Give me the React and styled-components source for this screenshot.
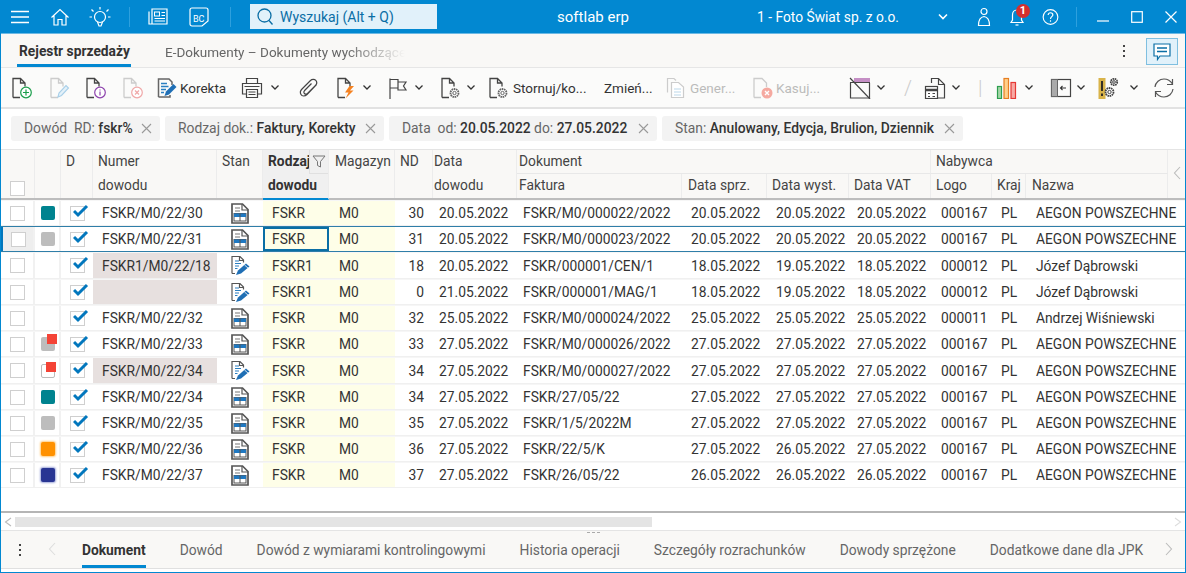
import React from 'react';
import styled, { createGlobalStyle, css } from 'styled-components';

const COLUMNS = [34, 26, 32, 124, 46, 66, 66, 38, 84, 165, 85, 82, 82, 61, 34, 142, 17];
const GRID = COLUMNS.map((w) => `${w}px`).join(' ');

const ROW_HEIGHTS = [26, 26, 27, 26, 26, 26, 27, 26, 26, 26, 26];

const ROWS = [
	{ mark: 'teal', num: 'FSKR/M0/22/30', stan: 'doc', rodzaj: 'FSKR', nd: 30, data: '20.05.2022', fakt: 'FSKR/M0/000022/2022', sprz: '20.05.2022', wyst: '20.05.2022', vat: '20.05.2022', logo: '000167', nazwa: 'AEGON POWSZECHNE' },
	{ mark: 'gray', num: 'FSKR/M0/22/31', stan: 'doc', rodzaj: 'FSKR', nd: 31, data: '20.05.2022', fakt: 'FSKR/M0/000023/2022', sprz: '20.05.2022', wyst: '20.05.2022', vat: '20.05.2022', logo: '000167', nazwa: 'AEGON POWSZECHNE', selected: true },
	{ num: 'FSKR1/M0/22/18', pink: true, stan: 'edit', rodzaj: 'FSKR1', nd: 18, data: '20.05.2022', fakt: 'FSKR/000001/CEN/1', sprz: '18.05.2022', wyst: '19.05.2022', vat: '18.05.2022', logo: '000012', nazwa: 'Józef Dąbrowski' },
	{ num: '', pink: true, stan: 'edit', rodzaj: 'FSKR1', nd: 0, data: '21.05.2022', fakt: 'FSKR/000001/MAG/1', sprz: '18.05.2022', wyst: '19.05.2022', vat: '18.05.2022', logo: '000012', nazwa: 'Józef Dąbrowski' },
	{ num: 'FSKR/M0/22/32', stan: 'doc', rodzaj: 'FSKR', nd: 32, data: '25.05.2022', fakt: 'FSKR/M0/000024/2022', sprz: '25.05.2022', wyst: '25.05.2022', vat: '25.05.2022', logo: '000011', nazwa: 'Andrzej Wiśniewski' },
	{ mark: 'redGray', num: 'FSKR/M0/22/33', stan: 'doc', rodzaj: 'FSKR', nd: 33, data: '27.05.2022', fakt: 'FSKR/M0/000026/2022', sprz: '27.05.2022', wyst: '27.05.2022', vat: '27.05.2022', logo: '000167', nazwa: 'AEGON POWSZECHNE' },
	{ mark: 'redWhite', num: 'FSKR/M0/22/34', pink: true, stan: 'edit', rodzaj: 'FSKR', nd: 34, data: '27.05.2022', fakt: 'FSKR/M0/000027/2022', sprz: '27.05.2022', wyst: '27.05.2022', vat: '27.05.2022', logo: '000167', nazwa: 'AEGON POWSZECHNE' },
	{ mark: 'teal', num: 'FSKR/M0/22/34', stan: 'doc', rodzaj: 'FSKR', nd: 34, data: '27.05.2022', fakt: 'FSKR/27/05/22', sprz: '27.05.2022', wyst: '27.05.2022', vat: '27.05.2022', logo: '000167', nazwa: 'AEGON POWSZECHNE' },
	{ mark: 'gray', num: 'FSKR/M0/22/35', stan: 'doc', rodzaj: 'FSKR', nd: 35, data: '27.05.2022', fakt: 'FSKR/1/5/2022M', sprz: '27.05.2022', wyst: '27.05.2022', vat: '27.05.2022', logo: '000167', nazwa: 'AEGON POWSZECHNE' },
	{ mark: 'orange', num: 'FSKR/M0/22/36', stan: 'doc', rodzaj: 'FSKR', nd: 36, data: '27.05.2022', fakt: 'FSKR/22/5/K', sprz: '27.05.2022', wyst: '26.05.2022', vat: '27.05.2022', logo: '000167', nazwa: 'AEGON POWSZECHNE' },
	{ mark: 'navy', num: 'FSKR/M0/22/37', stan: 'doc', rodzaj: 'FSKR', nd: 37, data: '27.05.2022', fakt: 'FSKR/26/05/22', sprz: '26.05.2022', wyst: '26.05.2022', vat: '26.05.2022', logo: '000167', nazwa: 'AEGON POWSZECHNE' },
];

const FILTERS = [
	{ w: 149, parts: [['Dowód  RD: ', 'fskr%']] },
	{ w: 219, parts: [['Rodzaj dok.: ', 'Faktury, Korekty']] },
	{ w: 268, parts: [['Data  od: ', '20.05.2022'], [' do: ', '27.05.2022']] },
	{ w: 301, parts: [['Stan: ', 'Anulowany, Edycja, Brulion, Dziennik']] },
];

const BOTTOM_TABS = ['Dokument', 'Dowód', 'Dowód z wymiarami kontrolingowymi', 'Historia operacji', 'Szczegóły rozrachunków', 'Dowody sprzężone', 'Dodatkowe dane dla JPK'];

const Glyph = ({ w = 22, h = 22, vb, children, ...rest }) => (
	<svg width={w} height={h} viewBox={vb || `0 0 ${w} ${h}`} fill="none" {...rest}>
		{children}
	</svg>
);

const Page = ({ c = '#444' }) => (
	<path d="M2 20.5V1.5H9.5L14 6V9.5M9.5 1.5V6H14M2 20.5H9" stroke={c} strokeWidth="1.3" />
);

const Chevron = () => (
	<Glyph w={10} h={8}>
		<path d="M1.5 1.5L5 5L8.5 1.5" stroke="#333" strokeWidth="1.3" />
	</Glyph>
);

const DocAdd = () => (
	<Glyph>
		<Page />
		<circle cx="15" cy="15.5" r="5.3" stroke="#1b9e4b" strokeWidth="1.2" fill="#fff" />
		<path d="M15 12.5V18.5M12 15.5H18" stroke="#1b9e4b" strokeWidth="1.2" />
	</Glyph>
);
const DocPen = () => (
	<Glyph>
		<Page c="#ccc" />
		<path d="M9 20L10 16L17 8.5L19.5 11L12.5 18.5Z" stroke="#a8cfe8" strokeWidth="1.1" fill="#e4f1f9" />
	</Glyph>
);
const DocInfo = () => (
	<Glyph>
		<Page />
		<circle cx="15" cy="15.5" r="5.3" stroke="#8e44ad" strokeWidth="1.2" fill="#fff" />
		<path d="M15 14.5V18.5M15 12.5V13.6" stroke="#8e44ad" strokeWidth="1.2" />
	</Glyph>
);
const DocCancel = () => (
	<Glyph>
		<Page c="#ccc" />
		<circle cx="15" cy="15.5" r="5.3" stroke="#f0a8a8" strokeWidth="1.2" fill="#fff" />
		<path d="M13 13.5L17 17.5M17 13.5L13 17.5" stroke="#f0a8a8" strokeWidth="1.2" />
	</Glyph>
);
const KorektaIcon = () => (
	<Glyph w={20} h={20}>
		<path d="M1.5 19V1H12L15 4V7M1.5 19H13V17" stroke="#666" strokeWidth="1.5" />
		<path d="M4 5.5H10M4 8.5H11.5M4 11.5H9M4 14.5H7" stroke="#2a7fc1" strokeWidth="1.3" />
		<path d="M7.5 18L9 13.5L16.5 6L19.5 9L12 16.5Z" fill="#1f6fb5" />
	</Glyph>
);
const StanEdit = () => (
	<Glyph w={21} h={21}>
		<path d="M2 18.5V1.5H10L13.5 5V7.5M9.5 1.5V5.5H13.5M2 18.5H5" stroke="#555" strokeWidth="1.2" />
		<path d="M5 6H9M5 8.5H11M5 11H9M5 13.5H7.5" stroke="#2a7fc1" strokeWidth="1.1" />
		<path d="M6 20L8 15.5L16 8.5L19.5 11.5L11 18.5Z" fill="#1f6fb5" />
		<path d="M14.5 10L18 13" stroke="#fff" strokeWidth="0.8" />
	</Glyph>
);
const Printer = () => (
	<Glyph>
		<path d="M5.5 6V1.5H16.5V6M5.5 17H1.5V6.5H20.5V17H16.5" stroke="#444" strokeWidth="1.2" />
		<path d="M5.5 12.5H16.5V20.5H5.5Z" stroke="#444" strokeWidth="1.2" />
		<path d="M7.5 15H14.5M7.5 17.5H14.5M3.5 9.5H18.5" stroke="#444" strokeWidth="1" />
	</Glyph>
);
const Clip = () => (
	<Glyph>
		<path d="M18.5 7.5L9 17.5C7 19.5 4 19.5 3 17.5C1.8 15.5 2.5 13.5 4 12L12.5 3.5C14 2 16.5 2 17.8 3.3C19 4.8 19 6.8 17.5 8.3L9.5 16.3C8.5 17.3 7 17.3 6.3 16.5C5.5 15.5 5.8 14.3 6.6 13.5L13.5 6.5" stroke="#444" strokeWidth="1.2" />
	</Glyph>
);
const DocBolt = () => (
	<Glyph>
		<Page />
		<path d="M13.5 9L9 15.5H12.5L9.5 21.5L17.5 13.5H14L18 9Z" fill="#f58220" />
	</Glyph>
);
const Flag = () => (
	<Glyph>
		<path d="M2 22V1.5M2 2.5H10V5H18L15.5 9L18 13H10V11H2M10 2.5V11" stroke="#444" strokeWidth="1.2" />
	</Glyph>
);
const Gear = ({ x, y, r = 4, c = '#666' }) => (
	<g>
		<circle cx={x} cy={y} r={r} stroke={c} strokeWidth="1.8" strokeDasharray="1.6 0.6" fill="#fff" />
		<circle cx={x} cy={y} r={r / 2.4} stroke={c} strokeWidth="1" />
	</g>
);
const DocGear = () => (
	<Glyph>
		<Page />
		<Gear x={14.5} y={16} />
	</Glyph>
);
const DocCopies = () => (
	<Glyph>
		<path d="M2.5 15.5V1.5H9L11 3.5" stroke="#ccc" strokeWidth="1.2" />
		<path d="M6.5 20.5V5.5H13.5L18.5 10V20.5Z" stroke="#ccc" strokeWidth="1.2" fill="#fff" />
		<path d="M9 12H16M9 15H16M9 18H16" stroke="#bcd8ea" strokeWidth="1.2" />
	</Glyph>
);
const DocDelete = () => (
	<Glyph>
		<path d="M2 20.5V1.5H10L14.5 6V10M2 20.5H9" stroke="#ccc" strokeWidth="1.3" />
		<circle cx="15" cy="16" r="5.5" fill="#f5a9a0" />
		<path d="M13 14L17 18M17 14L13 18" stroke="#fff" strokeWidth="1.4" />
	</Glyph>
);
const Striped = () => (
	<Glyph>
		<rect x="5" y="1" width="16" height="5" fill="#c58fc5" />
		<path d="M1.5 5.5V21H20.5V6M1 5.5H21" stroke="#444" strokeWidth="1.2" />
		<path d="M1 1L21 22" stroke="#444" strokeWidth="1.2" />
	</Glyph>
);
const CalcDoc = () => (
	<Glyph>
		<path d="M7.5 6V1.5H14.5L20.5 7.5V21H14M14.5 1.5V7.5H20.5" stroke="#444" strokeWidth="1.2" />
		<rect x="1.5" y="9.5" width="12" height="12" stroke="#444" strokeWidth="1.2" fill="#fff" />
		<path d="M1.5 13H13.5" stroke="#444" strokeWidth="2.5" />
		<path d="M4 16.5H6M8.5 16.5H11M4 19.5H6M8.5 19.5H11" stroke="#444" strokeWidth="1.2" />
	</Glyph>
);
const Bars = () => (
	<Glyph>
		<rect x="1.5" y="9.5" width="4" height="12" fill="#a5d6a7" stroke="#2e9e4f" strokeWidth="1.2" />
		<rect x="8" y="1.5" width="4.5" height="20" fill="#ffd08a" stroke="#e67e22" strokeWidth="1.2" />
		<rect x="15" y="5.5" width="4.5" height="16" fill="#f8a9a4" stroke="#e53935" strokeWidth="1.2" />
	</Glyph>
);
const PanelBack = () => (
	<Glyph>
		<rect x="1.5" y="2.5" width="19" height="17" stroke="#444" strokeWidth="1.2" />
		<rect x="1.5" y="2.5" width="6" height="17" fill="#aaa" stroke="#666" />
		<path d="M16 11H10.5M12.5 9L10.5 11L12.5 13" stroke="#333" strokeWidth="1.1" />
	</Glyph>
);
const WarnGear = () => (
	<Glyph>
		<rect x="0.5" y="1" width="7" height="21" fill="#d9b44a" />
		<path d="M4 4V14M4 16.5V19" stroke="#222" strokeWidth="1.8" />
		<Gear x={16} y={5} r={3.2} c="#444" />
		<Gear x={11.5} y={15} r={4} c="#444" />
	</Glyph>
);
const Refresh = () => (
	<Glyph>
		<path d="M2 10C2.5 5.5 6.5 2 11 2C14.5 2 17.5 3.8 19.5 7M19.5 2V7.5H14" stroke="#555" strokeWidth="1.2" />
		<path d="M20 12C19.5 16.5 15.5 20 11 20C7.5 20 4.5 18.2 2.5 15M2.5 20V14.5H8" stroke="#555" strokeWidth="1.2" />
	</Glyph>
);

const DocTable = () => (
	<Glyph w={18} h={21}>
		<path d="M1 20V1H11.5L17 6.5V20Z" stroke="#555" strokeWidth="1.7" fill="#fff" />
		<path d="M11 1V7H17" stroke="#555" strokeWidth="1.2" />
		<path d="M4 5H9M4 8H9" stroke="#777" strokeWidth="1.1" />
		<rect x="3" y="10.5" width="12" height="7.5" fill="#fff" stroke="#555" strokeWidth="1" />
		<rect x="3" y="10.5" width="12" height="3.5" fill="#1f78c1" />
		<path d="M9 10.5V18" stroke="#555" strokeWidth="1" />
	</Glyph>
);

const GlobalStyle = createGlobalStyle`
	html, body {
		margin: 0;
		padding: 0;
		background: #fff;
	}
	body {
		font-family: Roboto, "Liberation Sans", sans-serif;
		color: #333;
		overflow: hidden;
	}
`;

const Window = styled.div`
	width: 1186px;
	height: 573px;
	box-sizing: border-box;
	border: solid #0288d1;
	border-width: 0 1px 1px 1px;
	display: flex;
	flex-direction: column;
	overflow: hidden;
`;

const TitleBar = styled.header`
	height: 33px;
	margin: 0 -1px;
	background: #0288d1;
	border-bottom: 1px solid #6cb9e4;
	display: flex;
	align-items: center;
	flex: none;
	color: #fff;
`;

const TitleSlot = styled.div`
	flex: none;
	width: ${(p) => p.$w}px;
	margin-left: ${(p) => p.$ml ?? 0}px;
	display: flex;
	align-items: center;
	justify-content: center;
	height: 100%;
	position: relative;
`;

const TitleSep = styled.div`
	flex: none;
	width: 1px;
	height: 20px;
	background: #2ea0de;
	margin: 0 ${(p) => p.$m}px;
`;

const SearchBox = styled.div`
	width: 187px;
	height: 25px;
	margin: 0 35px 0 10px;
	flex: none;
	background: #e1f1fa;
	color: #0a6ea5;
	font-size: 14px;
	display: flex;
	align-items: center;
	gap: 7px;
	padding-left: 7px;
	box-sizing: border-box;
`;

const AppName = styled.div`
	width: 140px;
	margin-left: 51px;
	flex: none;
	text-align: center;
	font-size: 15px;
`;

const Company = styled.div`
	font-size: 13.8px;
	width: 141px;
	margin-left: 94px;
	flex: none;
	white-space: nowrap;
`;

const Badge = styled.span`
	position: absolute;
	top: 4px;
	left: 24px;
	width: 14px;
	height: 14px;
	border-radius: 50%;
	background: #d32f2f;
	color: #fff;
	font-size: 11px;
	font-weight: 700;
	line-height: 14px;
	text-align: center;
`;

const TabsBar = styled.div`
	height: 34px;
	flex: none;
	background: #f9f8f6;
	border-bottom: 1px solid #e6e6e6;
	display: flex;
	align-items: stretch;
	box-sizing: border-box;
	padding-left: 16px;
	position: relative;
`;

const DocTab = styled.div`
	font-size: 13.5px;
	display: flex;
	align-items: center;
	white-space: nowrap;
	height: 33px;
	box-sizing: border-box;
	padding-top: 3px;
	${(p) =>
		p.$active
			? css`
					font-weight: 700;
					font-size: 13.8px;
					color: #333;
					padding-left: 2px;
					width: 114px;
					border-bottom: 3px solid #0288d1;
					margin-right: 34px;
			  `
			: css`
					color: #666;
					width: 240px;
					overflow: hidden;
					-webkit-mask-image: linear-gradient(90deg, #000 75%, transparent 100%);
					mask-image: linear-gradient(90deg, #000 75%, transparent 100%);
			  `}
`;

const Kebab = styled.div`
	position: absolute;
	${(p) => (p.$left != null ? `left: ${p.$left}px;` : `right: ${p.$right}px;`)}
	top: ${(p) => p.$top}px;
	display: flex;
	flex-direction: column;
	gap: 3px;
	& > i {
		display: block;
		width: 2px;
		height: 2px;
		background: #444;
	}
`;

const ChatButton = styled.div`
	position: absolute;
	right: 7px;
	top: 4px;
	width: 32px;
	height: 27px;
	box-sizing: border-box;
	background: #e1f1fa;
	border: 1px solid #7fbfe0;
	display: flex;
	align-items: center;
	justify-content: center;
`;

const Toolbar = styled.div`
	height: 39px;
	flex: none;
	display: flex;
	align-items: center;
	padding-left: 10px;
	background: #fbfbfa;
	border-bottom: 2px solid #e2e2e2;
`;

const ToolButton = styled.div`
	flex: none;
	width: ${(p) => p.$w}px;
	display: flex;
	align-items: center;
	gap: ${(p) => p.$gap ?? 3}px;
	font-size: 13.5px;
	white-space: nowrap;
	color: ${(p) => (p.$off ? '#bbb' : '#333')};
`;

const ToolSlash = styled.div`
	flex: none;
	width: ${(p) => p.$w}px;
	color: #ccc;
	font-size: 20px;
	font-weight: 300;
`;

const FilterBar = styled.div`
	height: 40px;
	flex: none;
	display: flex;
	align-items: center;
	gap: 5px;
	padding: 0 0 2px 10px;
	box-sizing: border-box;
`;

const Chip = styled.div`
	width: ${(p) => p.$w}px;
	height: 25px;
	flex: none;
	box-sizing: border-box;
	background: #f3f3f3;
	border-radius: 3px;
	display: flex;
	align-items: center;
	justify-content: space-between;
	padding: 0 8px 0 13px;
	font-size: 13.85px;
	color: #666;
	white-space: pre;
	& b {
		font-weight: 500;
		color: #333;
	}
`;

const TableHead = styled.div`
	display: grid;
	grid-template-columns: ${GRID};
	grid-template-rows: 24px 24px;
	flex: none;
	background: #f9f8f6;
	border-top: 1px solid #e4e4e4;
	border-bottom: 2px solid #bdbdbd;
	font-size: 13.8px;
	color: #444;
`;

const HeadCell = styled.div`
	grid-column: ${(p) => p.$col} / span ${(p) => p.$span || 1};
	grid-row: ${(p) => p.$row} / span ${(p) => p.$rows || 1};
	display: flex;
	align-items: center;
	padding-left: ${(p) => p.$pad ?? 5}px;
	padding-bottom: 2px;
	box-sizing: border-box;
	white-space: nowrap;
	position: relative;
	border-right: 1px solid ${(p) => (p.$bare ? 'transparent' : '#ececec')};
	${(p) => p.$line && 'border-bottom: 1px solid #e8e8e8;'}
	${(p) => p.$end && 'align-items: flex-end; padding-bottom: 2px;'}
	${(p) => p.$top && 'align-items: flex-start; padding-top: 3px;'}
	${(p) =>
		p.$sorted &&
		css`
			font-weight: 700;
			color: #333;
			background: #f0f0f0;
		`}
	${(p) => p.$under && 'border-bottom: 2px solid #0288d1; margin-bottom: -2px;'}
`;

const FilterBox = styled.span`
	position: absolute;
	right: 0;
	top: 0;
	width: 19px;
	height: 24px;
	display: flex;
	align-items: center;
	justify-content: center;
	background: #f0f0f0;
	border-bottom: 1px solid #e0e0e0;
	border-left: 1px solid #e0e0e0;
	box-sizing: border-box;
`;

const Body = styled.div`
	flex: 1;
	display: flex;
	flex-direction: column;
	min-height: 0;
`;

const Row = styled.div`
	display: grid;
	grid-template-columns: ${GRID};
	height: ${(p) => p.$h}px;
	flex: none;
	box-sizing: border-box;
	font-size: 13.8px;
	color: #333;
	border-top: 1px solid #f6f6f6;
	border-bottom: 1px solid #f0f0f0;
	${(p) =>
		p.$selected &&
		css`
			border-top: 1px solid #2f7ea8;
			border-bottom: 1px solid #2f7ea8;
		`}
`;

const Cell = styled.div`
	display: flex;
	align-items: center;
	justify-content: ${(p) => (p.$right ? 'flex-end' : p.$center ? 'center' : 'flex-start')};
	padding-left: ${(p) => p.$pad ?? 0}px;
	padding-right: ${(p) => p.$padR ?? 0}px;
	box-sizing: border-box;
	white-space: nowrap;
	overflow: hidden;
	min-width: 0;
	${(p) => p.$span && `grid-column: span ${p.$span};`}
	${(p) => p.$divider && 'border-right: 2px solid #f1f1f1;'}
	${(p) => p.$yellow && 'background: #fefee8;'}
	${(p) => p.$pink && 'background: #e7e0df;'}
	${(p) => p.$focus && 'outline: 2px solid #0a6ea5; outline-offset: -2px;'}
	${(p) => p.$rail && 'background: #eeeeee; border-left: 2px solid #0277bd;'}
`;

const Box = styled.span`
	width: 15px;
	height: 15px;
	box-sizing: border-box;
	border: 1.5px solid #cfcfcf;
	background: #fff;
	display: block;
	flex: none;
	position: relative;
`;

const CheckMark = styled.svg`
	position: absolute;
	left: 2px;
	top: -3px;
`;

const Mark = styled.span`
	width: 14px;
	height: 14px;
	border-radius: 2px;
	display: block;
	box-sizing: border-box;
	position: relative;
	background: ${(p) => p.$c};
	${(p) => p.$glow && `box-shadow: 0 0 2px 1px ${p.$glow};`}
	${(p) => p.$hollow && 'border: 1px solid #bbb;'}
`;

const MarkTop = styled.span`
	position: absolute;
	top: -3px;
	right: -2px;
	width: 10px;
	height: 10px;
	background: #f44336;
`;

const ScrollBar = styled.div`
	height: 17px;
	flex: none;
	border-top: 2px solid #b5b5b5;
	border-bottom: 1px solid #e4e4e4;
	display: flex;
	align-items: center;
	justify-content: space-between;
	padding: 0 3px;
	gap: 1px;
`;

const ScrollThumb = styled.div`
	width: 637px;
	height: 10px;
	margin: 0 auto 0 2px;
	background: #e4e4e4;
`;

const BottomBar = styled.div`
	flex: none;
	height: 38px;
	background: #f9f8f6;
	border-bottom: 1px solid #e0e0e0;
	margin-bottom: 3px;
	box-sizing: border-box;
	display: flex;
	align-items: stretch;
	font-size: 13.8px;
	color: #666;
	position: relative;
`;

const BottomTab = styled.div`
	display: flex;
	align-items: center;
	white-space: nowrap;
	margin-right: 34px;
	box-sizing: border-box;
	height: 100%;
	padding-top: 3px;
	border-bottom: 3px solid transparent;
	${(p) =>
		p.$active &&
		css`
			font-weight: 700;
			color: #333;
			border-bottom-color: #0288d1;
		`}
`;

const BackArrow = styled.span`
	margin: 11px 26px 0 47px;
`;

const NextArrow = styled.span`
	position: absolute;
	right: 12px;
	top: 11px;
`;

const GripDots = styled.span`
	position: absolute;
	left: 586px;
	top: 1px;
	width: 13px;
	border-top: 1px dashed #aaa;
`;

const markFor = (mark) => {
	switch (mark) {
		case 'teal':
			return <Mark $c="#00838f" />;
		case 'gray':
			return <Mark $c="#bdbdbd" />;
		case 'orange':
			return <Mark $c="#ff9100" $glow="#ffcc80" />;
		case 'navy':
			return <Mark $c="#283593" $glow="#9fa8da" />;
		case 'redGray':
			return (
				<Mark $c="#bdbdbd">
					<MarkTop />
				</Mark>
			);
		case 'redWhite':
			return (
				<Mark $c="#fff" $hollow>
					<MarkTop />
				</Mark>
			);
		default:
			return null;
	}
};

const TableRow = ({ row, height }) => (
	<Row $selected={row.selected} $h={height}>
		<Cell $center $divider $rail={row.selected}>
			<Box />
		</Cell>
		<Cell $center $divider $pad={2}>
			{markFor(row.mark)}
		</Cell>
		<Cell $center>
			<Box>
				<CheckMark width="16" height="14" viewBox="0 0 16 14">
					<path d="M1 7L5 11L14 2" stroke="#0277bd" strokeWidth="3" fill="none" />
				</CheckMark>
			</Box>
		</Cell>
		<Cell $pad={9} $pink={row.pink}>
			{row.num}
		</Cell>
		<Cell $center>{row.stan === 'doc' ? <DocTable /> : <StanEdit />}</Cell>
		<Cell $pad={9} $yellow $focus={row.selected}>
			{row.rodzaj}
		</Cell>
		<Cell $pad={10} $yellow>
			M0
		</Cell>
		<Cell $right $padR={9}>
			{row.nd}
		</Cell>
		<Cell $pad={6}>{row.data}</Cell>
		<Cell $pad={6}>{row.fakt}</Cell>
		<Cell $pad={9}>{row.sprz}</Cell>
		<Cell $pad={9}>{row.wyst}</Cell>
		<Cell $pad={8}>{row.vat}</Cell>
		<Cell $pad={10}>{row.logo}</Cell>
		<Cell $pad={9}>PL</Cell>
		<Cell $pad={10} $span={2}>
			{row.nazwa}
		</Cell>
	</Row>
);

const CloseX = () => (
	<Glyph w={11} h={11}>
		<path d="M1 1L10 10M10 1L1 10" stroke="#999" strokeWidth="1.1" />
	</Glyph>
);

const SideChevron = ({ dir = 'left', c = '#bbb', h = 14 }) => (
	<Glyph w={8} h={h}>
		<path d={dir === 'left' ? `M7 1L1.5 ${h / 2}L7 ${h - 1}` : `M1 1L6.5 ${h / 2}L1 ${h - 1}`} stroke={c} strokeWidth="1.1" />
	</Glyph>
);

const Dots = (props) => (
	<Kebab {...props}>
		<i />
		<i />
		<i />
	</Kebab>
);

const UserIcons = () => (
	<>
		<TitleSlot $w={17} $ml={-13}>
			<Glyph w={16} h={20}>
				<circle cx="8" cy="4.5" r="3" stroke="#fff" strokeWidth="1.2" />
				<path d="M2.5 18.5C2.5 13 4 10 8 9.5C12 10 13.5 13 13.5 18.5Z" stroke="#fff" strokeWidth="1.2" />
			</Glyph>
		</TitleSlot>
		<TitleSlot $w={50}>
			<Glyph w={16} h={20}>
				<path d="M2 15.5H14L12.5 13V8C12.5 5 11 3 8 3C5 3 3.5 5 3.5 8V13Z" stroke="#fff" strokeWidth="1.2" />
				<path d="M6.5 18H9.5" stroke="#fff" strokeWidth="1.2" />
			</Glyph>
			<Badge>1</Badge>
		</TitleSlot>
		<TitleSlot $w={17}>
			<Glyph w={18} h={18}>
				<circle cx="9" cy="9" r="7.8" stroke="#fff" strokeWidth="1.2" />
				<path d="M6.5 7C6.5 5.5 7.6 4.5 9 4.5C10.4 4.5 11.5 5.5 11.5 6.8C11.5 8.5 9 8.8 9 11M9 12.5V14" stroke="#fff" strokeWidth="1.2" />
			</Glyph>
		</TitleSlot>
		<TitleSep $m={17} />
		<TitleSlot $w={17}>
			<Glyph w={14} h={14}>
				<path d="M1 11H13" stroke="#fff" strokeWidth="1.2" />
			</Glyph>
		</TitleSlot>
		<TitleSlot $w={51}>
			<Glyph w={12} h={12}>
				<rect x="0.7" y="0.7" width="10.6" height="10.6" stroke="#fff" strokeWidth="1.2" />
			</Glyph>
		</TitleSlot>
		<TitleSlot $w={18}>
			<Glyph w={12} h={12}>
				<path d="M0.5 0.5L11.5 11.5M11.5 0.5L0.5 11.5" stroke="#fff" strokeWidth="1.2" />
			</Glyph>
		</TitleSlot>
	</>
);

const App = () => (
	<>
		<GlobalStyle />
		<Window>
			<TitleBar>
				<TitleSlot $w={40}>
					<Glyph w={20} h={14}>
						<path d="M1 1.5H19M1 7H19M1 12.5H19" stroke="#fff" strokeWidth="1.4" />
					</Glyph>
				</TitleSlot>
				<TitleSlot $w={40}>
					<Glyph w={20} h={20}>
						<path d="M1.5 10.5L10 2.5L18.5 10.5M4 8.5V18H8V12.5H12V18H16V8.5" stroke="#fff" strokeWidth="1.2" />
					</Glyph>
				</TitleSlot>
				<TitleSlot $w={40}>
					<Glyph w={24} h={24}>
						<circle cx="12" cy="12" r="5.5" stroke="#fff" strokeWidth="1.2" />
						<path d="M9.5 17L11 21H13L14.5 17M12 2V4.5M3.5 4.5L5.5 6.5M20.5 4.5L18.5 6.5M1.5 12H4M20 12H22.5" stroke="#fff" strokeWidth="1.2" />
					</Glyph>
				</TitleSlot>
				<TitleSep $m={9} />
				<TitleSlot $w={38}>
					<Glyph w={20} h={17}>
						<path d="M1 3.5V16H19V1H4V16" stroke="#fff" strokeWidth="1.2" />
						<rect x="6.5" y="4" width="5" height="4" stroke="#fff" />
						<path d="M13.5 4.5H17M13.5 7.5H17M6.5 10.5H17M6.5 13H17" stroke="#fff" />
					</Glyph>
				</TitleSlot>
				<TitleSlot $w={44}>
					<Glyph w={20} h={20}>
						<path d="M3 1H17C18.2 1 19 1.8 19 3V14L13 19H3C1.8 19 1 18.2 1 17V3C1 1.8 1.8 1 3 1Z" stroke="#fff" strokeWidth="1.2" />
						<text x="4" y="15" fill="#fff" fontSize="9" fontFamily="Roboto">BC</text>
					</Glyph>
				</TitleSlot>
				<TitleSep $m={9} />
				<SearchBox>
					<Glyph w={16} h={17}>
						<circle cx="7.5" cy="7.5" r="6.5" stroke="#0a6ea5" strokeWidth="1.3" />
						<path d="M12 12.5L15.5 16.5" stroke="#0a6ea5" strokeWidth="1.3" />
					</Glyph>
					Wyszukaj (Alt + Q)
				</SearchBox>
				<AppName>softlab erp</AppName>
				<Company>1 - Foto Świat sp. z o.o.</Company>
				<TitleSlot $w={90}>
					<Glyph w={10} h={8}>
						<path d="M1 1.5L5 5.5L9 1.5" stroke="#fff" strokeWidth="1.6" />
					</Glyph>
				</TitleSlot>
				<UserIcons />
			</TitleBar>
			<TabsBar>
				<DocTab $active>Rejestr sprzedaży</DocTab>
				<DocTab>E-Dokumenty – Dokumenty wychodzące</DocTab>
				<Dots $right={60} $top={11} />
				<ChatButton>
					<Glyph w={18} h={18}>
						<path d="M1 1H17V13H7L4.5 16.5V13H1Z" stroke="#0a6ea5" strokeWidth="1.2" fill="#fff" />
						<path d="M4 5H14M4 8.5H14" stroke="#0a6ea5" strokeWidth="1.4" />
					</Glyph>
				</ChatButton>
			</TabsBar>
			<Toolbar>
				<ToolButton $w={38}><DocAdd /></ToolButton>
				<ToolButton $w={36}><DocPen /></ToolButton>
				<ToolButton $w={37}><DocInfo /></ToolButton>
				<ToolButton $w={35}><DocCancel /></ToolButton>
				<ToolButton $w={84} $gap={3}><KorektaIcon />Korekta</ToolButton>
				<ToolButton $w={57} $gap={7}><Printer /><Chevron /></ToolButton>
				<ToolButton $w={38}><Clip /></ToolButton>
				<ToolButton $w={52} $gap={4}><DocBolt /><Chevron /></ToolButton>
				<ToolButton $w={52} $gap={4}><Flag /><Chevron /></ToolButton>
				<ToolButton $w={48} $gap={4}><DocGear /><Chevron /></ToolButton>
				<ToolButton $w={116} $gap={3}><DocGear />Stornuj/ko...</ToolButton>
				<ToolButton $w={61}>Zmień...</ToolButton>
				<ToolButton $w={87} $off><DocCopies />Gener...</ToolButton>
				<ToolButton $w={97} $off $gap={2}><DocDelete />Kasuj...</ToolButton>
				<ToolButton $w={55} $gap={5}><Striped /><Chevron /></ToolButton>
				<ToolSlash $w={20}>/</ToolSlash>
				<ToolButton $w={54} $gap={5}><CalcDoc /><Chevron /></ToolButton>
				<ToolSlash $w={18}>|</ToolSlash>
				<ToolButton $w={54} $gap={6}><Bars /><Chevron /></ToolButton>
				<ToolButton $w={48} $gap={4}><PanelBack /><Chevron /></ToolButton>
				<ToolButton $w={55} $gap={9}><WarnGear /><Chevron /></ToolButton>
				<ToolButton $w={24}><Refresh /></ToolButton>
			</Toolbar>
			<FilterBar>
				{FILTERS.map((f) => (
					<Chip key={f.w} $w={f.w}>
						<span>
							{f.parts.map(([label, value]) => (
								<React.Fragment key={label}>
									{label}
									<b>{value}</b>
								</React.Fragment>
							))}
						</span>
						<CloseX />
					</Chip>
				))}
			</FilterBar>
			<TableHead>
				<HeadCell $col={1} $row={1} $rows={2} $end $pad={9}>
					<Box />
				</HeadCell>
				<HeadCell $col={2} $row={1} $rows={2} />
				<HeadCell $col={3} $row={1} $rows={2} $top>D</HeadCell>
				<HeadCell $col={4} $row={1}>Numer</HeadCell>
				<HeadCell $col={4} $row={2}>dowodu</HeadCell>
				<HeadCell $col={5} $row={1} $rows={2} $top>Stan</HeadCell>
				<HeadCell $col={6} $row={1} $sorted>
					Rodzaj
					<FilterBox>
						<Glyph w={14} h={13}>
							<path d="M1 1H13L8.5 6.5V12L5.5 10.5V6.5Z" stroke="#777" strokeWidth="1" />
						</Glyph>
					</FilterBox>
				</HeadCell>
				<HeadCell $col={6} $row={2} $sorted $under>dowodu</HeadCell>
				<HeadCell $col={7} $row={1} $rows={2} $top $pad={6}>Magazyn</HeadCell>
				<HeadCell $col={8} $row={1} $rows={2} $top>ND</HeadCell>
				<HeadCell $col={9} $row={1} $pad={1}>Data</HeadCell>
				<HeadCell $col={9} $row={2} $pad={1}>dowodu</HeadCell>
				<HeadCell $col={10} $row={1} $span={4} $line $pad={2}>Dokument</HeadCell>
				<HeadCell $col={10} $row={2} $pad={2}>Faktura</HeadCell>
				<HeadCell $col={11} $row={2} $pad={6}>Data sprz.</HeadCell>
				<HeadCell $col={12} $row={2} $pad={5}>Data wyst.</HeadCell>
				<HeadCell $col={13} $row={2} $pad={5}>Data VAT</HeadCell>
				<HeadCell $col={14} $row={1} $span={3} $line>Nabywca</HeadCell>
				<HeadCell $col={14} $row={2} $pad={5}>Logo</HeadCell>
				<HeadCell $col={15} $row={2}>Kraj</HeadCell>
				<HeadCell $col={16} $row={2} $pad={6}>Nazwa</HeadCell>
				<HeadCell $col={17} $row={1} $rows={2} $pad={5} $bare>
					<SideChevron />
				</HeadCell>
			</TableHead>
			<Body>
				{ROWS.map((row, i) => (
					<TableRow key={i} row={row} height={ROW_HEIGHTS[i]} />
				))}
			</Body>
			<ScrollBar>
				<SideChevron h={10} />
				<ScrollThumb />
				<SideChevron dir="right" h={10} c="#ddd" />
			</ScrollBar>
			<BottomBar>
				<GripDots />
				<Dots $left={18} $top={13} />
				<BackArrow>
					<SideChevron c="#ddd" />
				</BackArrow>
				{BOTTOM_TABS.map((t, i) => (
					<BottomTab key={t} $active={i === 0}>{t}</BottomTab>
				))}
				<NextArrow>
					<SideChevron dir="right" />
				</NextArrow>
			</BottomBar>
		</Window>
	</>
);

export default App;
